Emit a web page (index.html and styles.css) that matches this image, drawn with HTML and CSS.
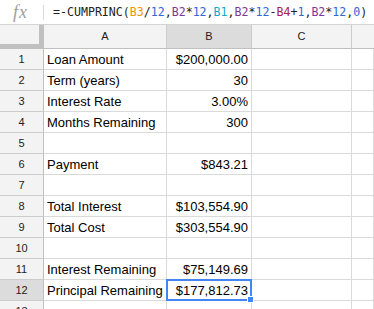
FILE: index.html
```html
<!DOCTYPE html>
<html>
<head>
<meta charset="utf-8">
<link rel="stylesheet" href="styles.css">
</head>
<body>
<div class="formula-bar">
  <div class="fx">fx</div>
  <div class="fx-sep"></div>
  <div class="formula"><span>=-CUMPRINC(</span><span class="r-or">B3</span><span>/</span><span class="num">12</span><span>,</span><span class="r-pu">B2</span><span>*</span><span class="num">12</span><span>,</span><span class="r-cy">B1</span><span>,</span><span class="r-pu">B2</span><span>*</span><span class="num">12</span><span>-</span><span class="r-re">B4</span><span>+</span><span class="num">1</span><span>,</span><span class="r-pu">B2</span><span>*</span><span class="num">12</span><span>,</span><span class="num">0</span><span>)</span></div>
</div>
<div class="sheet">
  <div class="hd corner"></div><div class="hd col">A</div><div class="hd col sel-hd">B</div><div class="hd col">C</div><div class="hd col last"></div>

  <div class="rn">1</div><div class="c">Loan Amount</div><div class="c n">$200,000.00</div><div class="c"></div><div class="c"></div>
  <div class="rn">2</div><div class="c">Term (years)</div><div class="c n">30</div><div class="c"></div><div class="c"></div>
  <div class="rn">3</div><div class="c">Interest Rate</div><div class="c n">3.00%</div><div class="c"></div><div class="c"></div>
  <div class="rn">4</div><div class="c">Months Remaining</div><div class="c n">300</div><div class="c"></div><div class="c"></div>
  <div class="rn">5</div><div class="c"></div><div class="c n"></div><div class="c"></div><div class="c"></div>
  <div class="rn">6</div><div class="c">Payment</div><div class="c n">$843.21</div><div class="c"></div><div class="c"></div>
  <div class="rn">7</div><div class="c"></div><div class="c n"></div><div class="c"></div><div class="c"></div>
  <div class="rn">8</div><div class="c">Total Interest</div><div class="c n">$103,554.90</div><div class="c"></div><div class="c"></div>
  <div class="rn">9</div><div class="c">Total Cost</div><div class="c n">$303,554.90</div><div class="c"></div><div class="c"></div>
  <div class="rn">10</div><div class="c"></div><div class="c n"></div><div class="c"></div><div class="c"></div>
  <div class="rn">11</div><div class="c">Interest Remaining</div><div class="c n">$75,149.69</div><div class="c"></div><div class="c"></div>
  <div class="rn sel-hd">12</div><div class="c">Principal Remaining</div><div class="c n active">$177,812.73<span class="sel-box"><span class="sel-handle"></span></span></div><div class="c"></div><div class="c"></div>
  <div class="rn">13</div><div class="c"></div><div class="c n"></div><div class="c"></div><div class="c"></div>
</div>
</body>
</html>
```

FILE: styles.css
```css
* { box-sizing: border-box; }
html, body { margin: 0; padding: 0; background: #fff; }
body { width: 374px; height: 309px; overflow: hidden; font-family: "Liberation Sans", Arial, sans-serif; color: #000; }

.formula-bar {
  height: 25px;
  display: flex;
  align-items: center;
  border-bottom: 1px solid #d4d4d4;
}
.fx {
  width: 43px;
  padding-left: 13px;
  font-family: "Liberation Serif", "Times New Roman", serif;
  font-style: italic;
  font-size: 18px;
  letter-spacing: 1px;
  color: #9e9e9e;
  line-height: 24px;
  margin-top: -1px;
}
.fx-sep { width: 1px; height: 15px; background: #dadada; }
.formula {
  padding-left: 9px;
  font-family: "DejaVu Sans Mono", "Liberation Mono", monospace;
  font-size: 11.6px;
  color: #222;
  line-height: 24px;
  white-space: nowrap;
}
.r-or { color: #f09300; }
.r-pu { color: #7e3794; }
.r-cy { color: #11a9cc; }
.r-re { color: #a61d4c; }
.num { color: #3367d6; }

.sheet {
  display: grid;
  grid-template-columns: 44px 123px 85px 100px 22px;
  grid-template-rows: 24px;
  grid-auto-rows: 21px;
}
.hd {
  background: #f3f3f3;
  border-right: 1px solid #cccccc;
  border-bottom: 1px solid #c0c0c0;
  font-size: 11px;
  line-height: 23px;
  text-align: center;
  color: #222;
}
.hd.corner { box-shadow: inset -4px -4px 0 #c0c0c0; border-right-color: #c0c0c0; }
.hd.last { border-right: none; }
.sel-hd { background: #dcdcdc; }

.rn {
  background: #f3f3f3;
  border-right: 1px solid #c0c0c0;
  border-bottom: 1px solid #cccccc;
  font-size: 11px;
  text-align: center;
  padding-top: 1px;
  line-height: 19px;
  color: #222;
}
.rn.sel-hd { background: #dcdcdc; }

.c {
  border-right: 1px solid #dadada;
  border-bottom: 1px solid #dadada;
  font-size: 13px;
  padding: 1px 3px 0 3px;
  line-height: 19px;
  white-space: nowrap;
}
.c.n { text-align: right; }
.active { position: relative; }
.sel-box {
  position: absolute;
  left: -1px;
  top: -1px;
  right: -1px;
  bottom: -1px;
  border: 2px solid #4285f4;
}
.sel-handle {
  position: absolute;
  right: -4px;
  bottom: -4px;
  width: 7px;
  height: 7px;
  background: #4285f4;
  border: 1px solid #fff;
}
```
